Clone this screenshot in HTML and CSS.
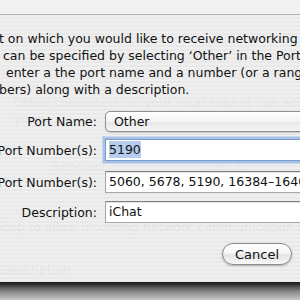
FILE: index.html
```html
<!DOCTYPE html>
<html>
<head>
<meta charset="utf-8">
<link rel="stylesheet" href="styles.css">
</head>
<body>
<div class="screen">
  <div class="topbar"></div>
  <div class="dialog">
    <div class="ghosts" aria-hidden="true">
      <span class="ghost g1">Other computers on your local subnet can access</span>
      <span class="ghost g2">your</span>
      <span class="ghost g3">Services</span>
      <span class="ghost g4">Internet</span>
      <span class="ghost g5">Stop to allow incoming network communication to all services</span>
      <span class="ghost g6">Description</span>
    </div>
    <div class="intro">
      <div class="line l1">t on which you would like to receive networking</div>
      <div class="line l2">can be specified by selecting ‘Other’ in the Port</div>
      <div class="line l3">enter a the port name and a number (or a range</div>
      <div class="line l4">bers) along with a description.</div>
    </div>
    <div class="form">
      <div class="row row-popup">
        <span class="label">Port Name:</span>
        <div class="popup">Other</div>
      </div>
      <div class="row row-tcp">
        <span class="label">Port Number(s):</span>
        <div class="field focused"><span class="sel">5190</span></div>
      </div>
      <div class="row row-udp">
        <span class="label">Port Number(s):</span>
        <div class="field">5060, 5678, 5190, 16384–16403</div>
      </div>
      <div class="row row-desc">
        <span class="label">Description:</span>
        <div class="field">iChat</div>
      </div>
    </div>
    <div class="buttons">
      <button class="btn">Cancel</button>
    </div>
  </div>
  <div class="shadow"></div>
</div>
</body>
</html>
```
FILE: styles.css
```css
html, body {
  margin: 0;
  padding: 0;
}
body {
  width: 300px;
  height: 300px;
  overflow: hidden;
  font-family: "DejaVu Sans", "Liberation Sans", sans-serif;
  font-size: 12.5px;
  color: #111;
}
.screen {
  width: 300px;
  height: 300px;
  display: flex;
  flex-direction: column;
  overflow: hidden;
}
.topbar {
  height: 14px;
  flex: none;
  background: #f2f2f2;
  border-bottom: 1px solid #b4b4b4;
}
.dialog {
  position: relative;
  height: 267px;
  flex: none;
  background: repeating-linear-gradient(to bottom, #efefef 0 2px, #e9e9e9 2px 4px);
}
.ghosts {
  position: absolute;
  inset: 0;
  pointer-events: none;
}
.ghost {
  position: absolute;
  color: rgba(0, 0, 0, 0.05);
  white-space: nowrap;
  font-size: 12.5px;
}
.g1 { left: 14px; top: 80px; }
.g2 { left: 14px; top: 96px; }
.g3 { left: 52px; top: 143px; }
.g4 { left: 200px; top: 143px; }
.g5 { left: -4px; top: 204px; }
.g6 { left: 0px; top: 247px; }

.intro {
  position: relative;
  padding-top: 15px;
}
.line {
  height: 17px;
  line-height: 17px;
  white-space: nowrap;
}
.l1 { margin-left: -1px; }
.l2 { padding-left: 3px; }
.l3 { padding-left: 6px; }
.l4 { margin-left: -1px; }

.form {
  position: relative;
  width: 330px;
}
.row {
  display: grid;
  grid-template-columns: 97px 1fr;
  column-gap: 8px;
  align-items: center;
}
.label {
  text-align: right;
  white-space: nowrap;
  justify-self: end;
}
.row-popup { margin-top: 13px; }
.row-tcp { margin-top: 7px; }
.row-udp { margin-top: 10px; }
.row-desc { margin-top: 8px; }

.popup {
  height: 19px;
  line-height: 19px;
  border: 1px solid #8e8e8e;
  border-radius: 5px;
  padding-left: 8px;
  background: linear-gradient(to bottom, #ffffff 0%, #f4f4f4 50%, #e6e6e6 51%, #f6f6f6 100%);
  box-shadow: 0 1px 1px rgba(0,0,0,0.15);
}
.field {
  height: 20px;
  line-height: 20px;
  background: #fff;
  border: 1px solid #a6a6a6;
  border-top-color: #7f7f7f;
  padding-left: 3px;
  white-space: nowrap;
  box-shadow: inset 0 1px 1px rgba(0,0,0,0.12);
}
.field.focused {
  border-color: #7b9bcc;
  box-shadow: 0 0 0 2px #a9c1e6, 0 0 0 3px #c7d7ee;
}
.sel {
  background: #b6cdee;
  padding: 1px 0;
}
.buttons {
  display: flex;
  justify-content: flex-end;
  padding-right: 8px;
  margin-top: 20px;
}
.btn {
  width: 70px;
  height: 22px;
  border: 1px solid #8a8a8a;
  border-radius: 11px;
  background: linear-gradient(to bottom, #ffffff 0%, #f6f6f6 45%, #e4e4e4 55%, #f8f8f8 100%);
  box-shadow: 0 1px 2px rgba(0,0,0,0.25);
  font-family: "DejaVu Sans", "Liberation Sans", sans-serif;
  font-size: 13px;
  color: #111;
  padding: 0;
}
.shadow {
  flex: 1;
  background: linear-gradient(to bottom, #1a1a1a 0px, #2a2a2a 2px, #555 5px, #8c8c8c 10px, #b8b8b8 16px, #c8c8c8 100%);
}
```
